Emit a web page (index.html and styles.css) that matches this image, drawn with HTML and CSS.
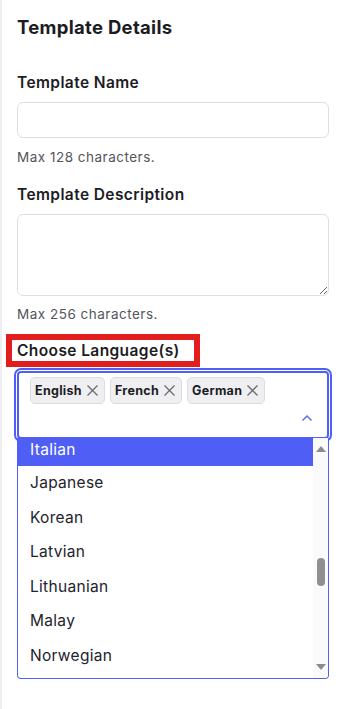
FILE: index.html
```html
<!DOCTYPE html>
<html lang="en">
<head>
    <meta charset="UTF-8">
    <meta name="viewport" content="width=device-width, initial-scale=1.0">
    <title>Template Details</title>
    <link rel="stylesheet" href="styles.css">
</head>
<body>
    <div class="panel">
        <h2 class="panel-title">Template Details</h2>

        <label class="field-label" for="templateName">Template Name</label>
        <input type="text" id="templateName" class="text-input">
        <p class="hint">Max 128 characters.</p>

        <label class="field-label" for="templateDesc">Template Description</label>
        <textarea id="templateDesc" class="text-area"></textarea>
        <p class="hint">Max 256 characters.</p>

        <label class="field-label marked">Choose Language(s)</label>
        <div class="multi-select" id="languageSelect">
            <div class="chips">
                <span class="chip">English <svg class="chip-x" width="13" height="13" viewBox="0 0 13 13"><path d="M1.5 1.5 L11.5 11.5 M11.5 1.5 L1.5 11.5" stroke="#6b6b72" stroke-width="1.3"/></svg></span>
                <span class="chip">French <svg class="chip-x" width="13" height="13" viewBox="0 0 13 13"><path d="M1.5 1.5 L11.5 11.5 M11.5 1.5 L1.5 11.5" stroke="#6b6b72" stroke-width="1.3"/></svg></span>
                <span class="chip">German <svg class="chip-x" width="13" height="13" viewBox="0 0 13 13"><path d="M1.5 1.5 L11.5 11.5 M11.5 1.5 L1.5 11.5" stroke="#6b6b72" stroke-width="1.3"/></svg></span>
            </div>
            <div class="indicator">
                <svg width="12" height="8" viewBox="0 0 12 8"><path d="M1.5 6.5 L6 2 L10.5 6.5" fill="none" stroke="#5566f0" stroke-width="1.4"/></svg>
            </div>
            <div class="options">
                <ul class="option-list" id="optionList"></ul>
                <div class="scrollbar">
                    <div class="sb-btn"><span class="arrow-up"></span></div>
                    <div class="sb-track"><div class="sb-thumb" id="thumb"></div></div>
                    <div class="sb-btn"><span class="arrow-down"></span></div>
                </div>
            </div>
        </div>
    </div>

    <script>
        const languages = ['Afrikaans', 'Albanian', 'Arabic', 'Bengali', 'Bulgarian', 'Catalan', 'Chinese',
            'Croatian', 'Czech', 'Danish', 'Dutch', 'English', 'Estonian', 'Filipino', 'Finnish', 'French',
            'Georgian', 'German', 'Greek', 'Gujarati', 'Hebrew', 'Hindi', 'Hungarian', 'Icelandic',
            'Indonesian', 'Irish', 'Italian', 'Japanese', 'Korean', 'Latvian', 'Lithuanian', 'Malay',
            'Norwegian', 'Persian', 'Polish', 'Portuguese', 'Punjabi', 'Romanian', 'Russian', 'Serbian',
            'Slovak', 'Slovenian', 'Spanish', 'Swahili', 'Swedish', 'Tamil', 'Telugu', 'Thai', 'Turkish',
            'Ukrainian', 'Urdu', 'Vietnamese'];

        const itemHeight = 34.5;
        const viewHeight = 240;
        const trackHeight = viewHeight - 44;
        const start = languages.indexOf('Italian');
        const scrollTop = start * itemHeight + 7;

        // only the rows that fit in the open list
        const optionList = document.getElementById('optionList');
        languages.slice(start, start + 7).forEach((name, i) => {
            const li = document.createElement('li');
            li.className = i === 0 ? 'option active first' : 'option';
            li.innerText = name;
            optionList.appendChild(li);
        });

        // scrollbar thumb from list size and scroll position
        const total = languages.length * itemHeight;
        const thumbHeight = Math.max(trackHeight * viewHeight / total, 28);
        const thumbTop = scrollTop / (total - viewHeight) * (trackHeight - thumbHeight);
        const thumb = document.getElementById('thumb');
        thumb.style.height = thumbHeight + 'px';
        thumb.style.marginTop = thumbTop + 'px';
    </script>
</body>
</html>
```

FILE: styles.css
```css
* {
    box-sizing: border-box;
}
body {
    margin: 0;
    font-family: Inter, "Noto Sans", sans-serif;
    color: #1c1c24;
    background: #fff;
}
.panel {
    min-height: 709px;
    border-left: 2px solid #efeff1;
    padding: 15px 11px 0 15px;
}
.panel-title {
    margin: 0 0 34px;
    font-size: 18.5px;
    line-height: 24px;
    font-weight: 700;
    letter-spacing: 0.3px;
}
.field-label {
    display: block;
    font-size: 15.5px;
    line-height: 20px;
    font-weight: 600;
    letter-spacing: 0.4px;
}
.text-input,
.text-area {
    display: block;
    width: 312px;
    margin-top: 9px;
    border: 1px solid #dedee4;
    border-radius: 6px;
    font: inherit;
}
.text-input {
    height: 36px;
}
.text-area {
    height: 82px;
    resize: vertical;
}
.hint {
    margin: 10px 0 19px;
    font-size: 13.5px;
    line-height: 18px;
    color: #55555c;
    letter-spacing: 0.5px;
}
.text-area + .hint {
    margin: 9px 0 11px;
}
.marked {
    width: 194px;
    margin-left: -11px;
    padding-left: 5px;
    border: 6px solid #e21d1d;
    line-height: 21px;
}
.multi-select {
    position: relative;
    width: 312px;
    height: 68px;
    margin-top: 4px;
    border: 2px solid #4f5ff6;
    outline: 2px solid #4f5ff6;
    outline-offset: 1px;
    border-radius: 4px;
    padding: 4px 11px 0 11px;
}
.chips {
    display: flex;
    gap: 5px;
}
.chip {
    display: flex;
    align-items: center;
    gap: 4px;
    height: 27px;
    padding: 0 5px 0 4px;
    background: #efeff1;
    border: 1px solid #dcdce0;
    border-radius: 5px;
    font-size: 12.5px;
    font-weight: 700;
    letter-spacing: 0.3px;
}
.indicator {
    display: flex;
    justify-content: flex-end;
    padding: 10px 3px 0 0;
}
.options {
    position: absolute;
    top: 65px;
    left: -2px;
    width: 312px;
    height: 241px;
    display: flex;
    background: #fff;
    border: 1px solid #4f5ff6;
    border-top: none;
    border-radius: 0 0 4px 4px;
    overflow: hidden;
}
.option-list {
    flex: 1;
    margin: 0;
    padding: 0;
    list-style: none;
    overflow: hidden;
}
.option {
    height: 34.5px;
    line-height: 34.5px;
    padding-left: 12px;
    font-size: 15.5px;
    letter-spacing: 0.3px;
    color: #23232b;
}
.option.first {
    height: 28px;
    line-height: 23px;
}
.option.active {
    background: #4f5ff6;
    color: #fff;
}
.scrollbar {
    width: 15px;
    display: flex;
    flex-direction: column;
    background: #fafafa;
}
.sb-btn {
    height: 22px;
    display: flex;
    align-items: center;
    justify-content: center;
}
.arrow-up,
.arrow-down {
    width: 0;
    height: 0;
    border-left: 5px solid transparent;
    border-right: 5px solid transparent;
}
.arrow-up {
    border-bottom: 6px solid #8b8b8b;
}
.arrow-down {
    border-top: 6px solid #8b8b8b;
}
.sb-track {
    flex: 1;
    display: flex;
    flex-direction: column;
    align-items: center;
}
.sb-thumb {
    width: 8px;
    border-radius: 4px;
    background: #8f8f8f;
}
```
